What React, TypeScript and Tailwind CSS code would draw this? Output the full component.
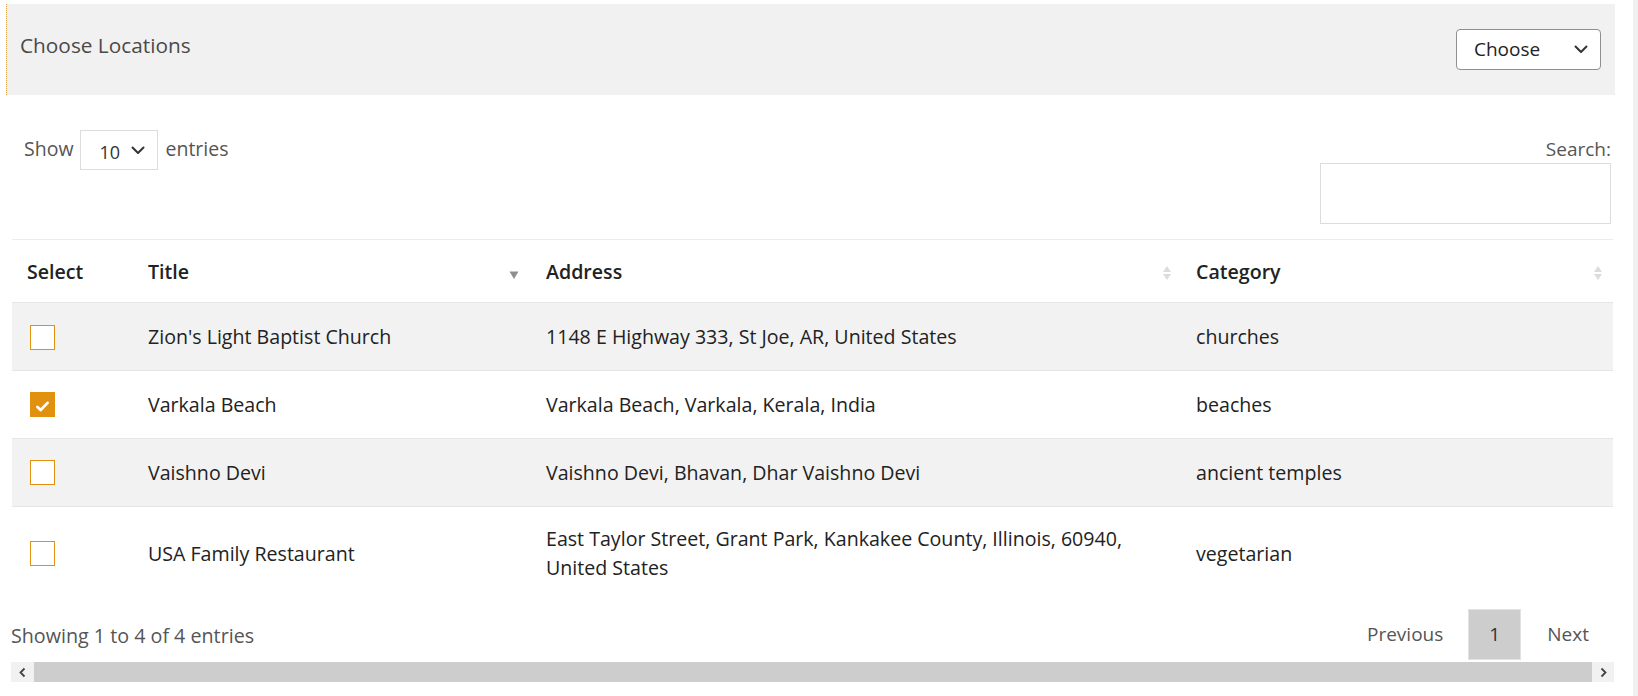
import React from "react";

const font = { fontFamily: '"Open Sans", "Noto Sans", sans-serif' };

function Chevron({ className }: { className?: string }) {
  return (
    <svg viewBox="0 0 14 9" className={className} fill="none">
      <polyline points="1.5,1.5 7,7 12.5,1.5" stroke="#333" strokeWidth="2" strokeLinecap="round" strokeLinejoin="round" />
    </svg>
  );
}

function SortBoth() {
  return (
    <svg viewBox="0 0 10 16" className="w-[10px] h-[16px]">
      <polygon points="1,7 9,7 5,1" fill="#dcdcdc" />
      <polygon points="1,9 9,9 5,15" fill="#dcdcdc" />
    </svg>
  );
}

function SortDesc() {
  return (
    <svg viewBox="0 0 10 10" className="w-[10px] h-[10px]">
      <polygon points="0.5,1.5 9.5,1.5 5,9" fill="#8f8f8f" />
    </svg>
  );
}

function Checkbox({ checked }: { checked?: boolean }) {
  return checked ? (
    <div className="w-[25px] h-[25px] bg-[#e2910e] flex items-center justify-center">
      <svg viewBox="0 0 14 12" className="w-[13px] h-[11px] mt-[4px] mr-[1px]">
        <path d="M1.5 6.5 L5 9.8 L12.5 2" stroke="#fff" strokeWidth="3" fill="none" strokeLinecap="round" strokeLinejoin="round" />
      </svg>
    </div>
  ) : (
    <div className="w-[25px] h-[25px] border-[1.5px] border-[#e2910e] bg-white" />
  );
}

const rows = [
  { title: "Zion's Light Baptist Church", address: "1148 E Highway 333, St Joe, AR, United States", cat: "churches", checked: false },
  { title: "Varkala Beach", address: "Varkala Beach, Varkala, Kerala, India", cat: "beaches", checked: true },
  { title: "Vaishno Devi", address: "Vaishno Devi, Bhavan, Dhar Vaishno Devi", cat: "ancient temples", checked: false },
  { title: "USA Family Restaurant", address: "East Taylor Street, Grant Park, Kankakee County, Illinois, 60940, United States", cat: "vegetarian", checked: false },
];

export default function App() {
  return (
    <div className="w-[1638px] h-[696px] bg-white flex overflow-hidden text-[#222]" style={font}>
      <div className="w-[1615px] pl-[6px] pt-[4px] flex flex-col shrink-0">
        {/* top panel */}
        <div className="h-[91px] bg-[#f1f1f1] border-l border-dotted border-[#d9a24a] flex justify-between items-start">
          <div className="pl-[13px] pt-[27px] text-[20.8px] leading-[28px] text-[#4a4a4a]">Choose Locations</div>
          <div className="mt-[25px] mr-[14px] w-[145px] h-[41px] bg-white border border-[#8f8f8f] rounded-[4px] flex items-center justify-between pl-[17px] pr-[12px]">
            <span className="text-[19px] text-[#222]">Choose</span>
            <Chevron className="w-[14px] h-[9px]" />
          </div>
        </div>

        <div className="pl-[5px] pr-[1px] flex flex-col">
          {/* controls */}
          <div className="mt-[35px] flex justify-between items-start">
            <div className="flex items-center pl-[13px] text-[19.5px] text-[#555]">
              <span className="-mt-[3px]">Show</span>
              <div className="ml-[6px] w-[78px] h-[40px] border border-[#dcdcdc] bg-white flex items-center pl-[19px] pr-[12px] justify-between">
                <span className="text-[18px] text-[#333] mt-[4px]">10</span>
                <Chevron className="w-[14px] h-[9px]" />
              </div>
              <span className="ml-[8px] -mt-[3px]">entries</span>
            </div>
            <div className="flex flex-col items-end pr-[3px]">
              <div className="mt-[6px] text-[19px] leading-[26px] text-[#555]">Search:</div>
              <div className="mt-[1px] w-[291px] h-[61px] border border-[#dcdcdc] bg-white" />
            </div>
          </div>

          {/* table */}
          <table className="mt-[15px] ml-[1px] w-[1601px] border-collapse table-fixed text-[19.6px]">
            <colgroup>
              <col className="w-[121px]" />
              <col className="w-[398px]" />
              <col className="w-[650px]" />
              <col className="w-[432px]" />
            </colgroup>
            <thead>
              <tr className="border-t border-[#ececec]">
                <th className="text-left font-semibold pl-[15px] pt-[17px] pb-[16px] leading-[29px]">Select</th>
                <th className="relative text-left font-semibold pl-[15px] pt-[17px] pb-[16px] leading-[29px]">
                  Title
                  <span className="absolute right-[12px] top-[30px]"><SortDesc /></span>
                </th>
                <th className="relative text-left font-semibold pl-[15px] pt-[17px] pb-[16px] leading-[29px]">
                  Address
                  <span className="absolute right-[9px] top-[25px]"><SortBoth /></span>
                </th>
                <th className="relative text-left font-semibold pl-[15px] pt-[17px] pb-[16px] leading-[29px]">
                  Category
                  <span className="absolute right-[10px] top-[25px]"><SortBoth /></span>
                </th>
              </tr>
            </thead>
            <tbody>
              {rows.map((r, i) => {
                const pad = i === 3 ? "pt-[17px] pb-[19px]" : "py-[19px]";
                return (
                  <tr key={i} className={`border-t border-[#e6e6e6] ${i % 2 === 0 ? "bg-[#f2f2f2]" : "bg-white"}`}>
                    <td className={`pl-[18px] ${pad} align-middle`}>
                      <div className={i === 0 ? "mt-[2px]" : ""}>
                        <Checkbox checked={r.checked} />
                      </div>
                    </td>
                    <td className={`pl-[15px] ${pad} leading-[29px] align-middle`}>{r.title}</td>
                    <td className={`pl-[15px] pr-[18px] ${pad} leading-[29px] align-middle`}>{r.address}</td>
                    <td className={`pl-[15px] ${pad} leading-[29px] align-middle`}>{r.cat}</td>
                  </tr>
                );
              })}
            </tbody>
          </table>

          {/* footer */}
          <div className="mt-[8px] flex justify-between items-center text-[19px] text-[#555]">
            <div className="mt-[2px] text-[19.7px]">Showing 1 to 4 of 4 entries</div>
            <div className="flex items-center pr-[7px]">
              <div className="px-[18px] h-[51px] flex items-center">Previous</div>
              <div className="ml-[7px] w-[53px] h-[51px] bg-[#cdcdcd] border border-[#e2e2e2] flex items-center justify-center text-[#333]">1</div>
              <div className="ml-[8px] px-[18px] h-[51px] flex items-center">Next</div>
            </div>
          </div>

          {/* horizontal scrollbar */}
          <div className="mt-[2px] h-[20px] flex bg-[#f1f1f1]">
            <div className="w-[23px] flex items-center justify-center">
              <svg viewBox="0 0 7 11" className="w-[7px] h-[11px]"><polyline points="5.5,1.5 1.5,5.5 5.5,9.5" stroke="#444" strokeWidth="1.8" fill="none" /></svg>
            </div>
            <div className="flex-1 bg-[#cdcdcd]" />
            <div className="w-[22px] flex items-center justify-center">
              <svg viewBox="0 0 7 11" className="w-[7px] h-[11px]"><polyline points="1.5,1.5 5.5,5.5 1.5,9.5" stroke="#444" strokeWidth="1.8" fill="none" /></svg>
            </div>
          </div>
        </div>
      </div>
      <div className="ml-auto w-[5px] h-full bg-[#f0f0f0]" />
    </div>
  );
}
